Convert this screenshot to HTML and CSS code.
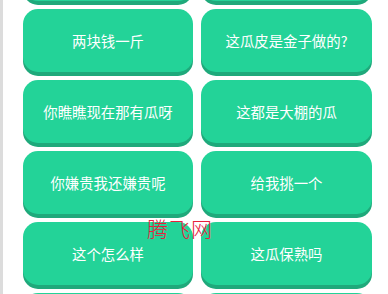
FILE: index.html
```html
<!DOCTYPE html>
<html lang="zh">
<head>
  <meta charset="UTF-8">
  <title>买瓜</title>
  <link rel="stylesheet" href="styles.css">
</head>
<body>
  <div class="page">
    <div class="grid">
      <div class="btn"></div>
      <div class="btn"></div>
      <div class="btn">两块钱一斤</div>
      <div class="btn">这瓜皮是金子做的?</div>
      <div class="btn">你瞧瞧现在那有瓜呀</div>
      <div class="btn">这都是大棚的瓜</div>
      <div class="btn">你嫌贵我还嫌贵呢</div>
      <div class="btn">给我挑一个</div>
      <div class="btn">这个怎么样</div>
      <div class="btn">这瓜保熟吗</div>
      <div class="btn"></div>
      <div class="btn"></div>
    </div>
    <div class="watermark">腾飞网</div>
  </div>
</body>
</html>
```

FILE: styles.css
```css
body {
  margin: 0;
  background: #fff;
  font-family: "Noto Sans CJK SC", "Noto Sans", sans-serif;
}

.page {
  position: relative;
  height: 294px;
  overflow: hidden;
  border-left: 3px solid #dcdcdc;
}

.grid {
  display: grid;
  grid-template-columns: 170px 171px;
  grid-auto-rows: 63px;
  column-gap: 8px;
  row-gap: 8px;
  padding-left: 20px;
  margin-top: -62px;
}

.btn {
  display: flex;
  align-items: center;
  justify-content: center;
  background-color: #23d398;
  color: #fff;
  font-size: 14.4px;
  border-radius: 15px;
  box-shadow: 0 4px 0 #1fa97b;
}

.watermark {
  position: absolute;
  left: 144px;
  top: 218px;
  font-size: 21px;
  line-height: 1;
  letter-spacing: 1px;
  color: #e8203c;
  font-weight: 300;
}
```
